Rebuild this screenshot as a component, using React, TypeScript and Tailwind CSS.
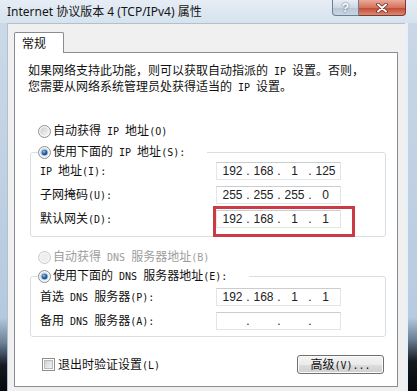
import React, { Fragment } from "react";

const LAT = "font-['DejaVu_Sans_Mono',monospace] text-[10px]";

function S({ t }: { t: string }) {
  const parts = t.split(/([\x20-\x7e]+)/).filter(Boolean);
  return (
    <span className="whitespace-pre">
      {parts.map((p, i) =>
        /^[\x20-\x7e]+$/.test(p) ? (
          <span key={i} className={LAT}>
            {p}
          </span>
        ) : (
          <Fragment key={i}>{p}</Fragment>
        )
      )}
    </span>
  );
}

function Radio({ checked, disabled }: { checked?: boolean; disabled?: boolean }) {
  return (
    <svg width="13" height="13" viewBox="0 0 13 13" className="shrink-0">
      <defs>
        <linearGradient id="rbg" x1="0" y1="0" x2="1" y2="1">
          <stop offset="0" stopColor="#c9cdd2" />
          <stop offset="1" stopColor="#f7f7f7" />
        </linearGradient>
        <radialGradient id="rdot" cx="0.4" cy="0.35" r="0.75">
          <stop offset="0" stopColor="#9ccbf2" />
          <stop offset="0.45" stopColor="#2f6cae" />
          <stop offset="1" stopColor="#10335f" />
        </radialGradient>
      </defs>
      <circle cx="6.5" cy="6.5" r="6" fill="#f6f6f6" stroke={disabled ? "#c8c8c8" : "#8e8f8f"} />
      <circle cx="6.5" cy="6.5" r="4.3" fill={disabled ? "#eeeeee" : "url(#rbg)"} />
      {checked && (
        <>
          <circle cx="6.5" cy="6.5" r="3.6" fill="#a9cdee" />
          <circle cx="6.5" cy="6.5" r="2.8" fill="url(#rdot)" />
        </>
      )}
    </svg>
  );
}

function IpBox({ v }: { v?: string[] }) {
  return (
    <div className="w-[125px] h-[18px] shrink-0 border border-[#e2e5e9] border-t-[#c9ccd0] bg-white flex items-center pl-[3px] font-['Liberation_Sans',sans-serif] text-[12px] leading-[14px] text-[#222]">
      {[0, 1, 2, 3].map((i) => (
        <Fragment key={i}>
          {i > 0 && <span className="w-[6px] text-center">.</span>}
          <span className="w-[25px] text-center">{v ? v[i] : ""}</span>
        </Fragment>
      ))}
    </div>
  );
}

function Row({ label, v }: { label: string; v?: string[] }) {
  return (
    <div className="flex items-center h-[18px]">
      <div className="w-[176px] text-[12px] leading-[14px]">
        <S t={label} />
      </div>
      <IpBox v={v} />
    </div>
  );
}

export default function App() {
  return (
    <div className="relative w-[417px] h-[391px] overflow-hidden flex flex-col bg-[#d5e1ed] font-['Noto_Sans_CJK_SC',sans-serif] text-[#111]">
      {/* title bar */}
      <div className="h-[23px] shrink-0 flex items-start bg-[linear-gradient(to_bottom,#e6edf5,#d6e2ee)]">
        <div className="pl-[7px] pt-[4px] text-[12px] leading-[15px] font-['Noto_Sans','Noto_Sans_CJK_SC',sans-serif] text-[#151515] whitespace-nowrap">
          Internet 协议版本 4 (TCP/IPv4) 属性
        </div>
        <div className="ml-auto mr-[11px] flex h-[16px]">
          <div className="w-[27px] h-full border border-t-0 border-[#6f7f92] rounded-bl-[4px] bg-[linear-gradient(to_bottom,#e8eef5,#cdd8e4_50%,#b7c5d5_51%,#cad6e3)] flex items-center justify-center text-white font-bold text-[12px] leading-none font-['Liberation_Sans',sans-serif] [text-shadow:0_0_2px_#34465c]">
            ?
          </div>
          <div className="w-[47px] h-full border border-t-0 border-l-0 border-[#7a3a33] rounded-br-[4px] bg-[linear-gradient(to_bottom,#eaa999,#d6735f_50%,#c3452f_51%,#da8a72)] flex items-center justify-center">
            <svg width="12" height="10" viewBox="0 0 12 10">
              <path d="M2 1.5 L10 8.5 M10 1.5 L2 8.5" stroke="#6a2a22" strokeWidth="3.6" strokeLinecap="round" />
              <path d="M2 1.5 L10 8.5 M10 1.5 L2 8.5" stroke="#ffffff" strokeWidth="2" strokeLinecap="round" />
            </svg>
          </div>
        </div>
      </div>

      <div className="flex flex-1 min-h-0">
        <div className="w-[7px] bg-[linear-gradient(to_bottom,#cbd9e8_0%,#b5c9de_80%,#6b7f95_87%,#141a22_93%,#05080c_100%)]" />
        <div className="w-[398px] bg-[#f0f0f0] border-l border-t border-[#b3bfcc] pt-[8px] pl-[6px] flex flex-col">
          {/* tab */}
          <div className="relative z-10 -mb-px w-[50px] h-[21px] bg-white border border-b-0 border-[#898c95] rounded-t-[2px] pl-[7px] flex items-center text-[12px] leading-[14px]">
            常规
          </div>
          {/* panel */}
          <div className="w-[384px] bg-white border border-[#898c95] flex flex-col pl-[13px] pr-[11px] pt-[10px] pb-[12px] text-[12px] leading-[14px]">
            <div className="leading-[14px]">
              <div>
                <S t="如果网络支持此功能，则可以获取自动指派的 IP 设置。否则，" />
              </div>
              <div>
                <S t="您需要从网络系统管理员处获得适当的 IP 设置。" />
              </div>
            </div>

            <div className="mt-[29px] ml-[10px] h-[14px] flex items-center gap-[2px]">
              <Radio />
              <S t="自动获得 IP 地址(O)" />
            </div>

            <fieldset className="mt-[7px] ml-[2px] border border-[#d5dfe5] rounded-[3px] pb-[8px]">
              <legend className="ml-[7px] pr-[22px] bg-white">
                <div className="h-[14px] flex items-center gap-[2px]">
                  <Radio checked />
                  <S t="使用下面的 IP 地址(S):" />
                </div>
              </legend>
              <div className="flex flex-col gap-[6px] pt-[3px] pl-[9px]">
                <Row label="IP 地址(I):" v={["192", "168", "1", "125"]} />
                <Row label="子网掩码(U):" v={["255", "255", "255", "0"]} />
                <Row label="默认网关(D):" v={["192", "168", "1", "1"]} />
              </div>
            </fieldset>

            <div className="mt-[13px] ml-[10px] h-[14px] flex items-center gap-[2px] text-[#9d9d9d]">
              <Radio disabled />
              <S t="自动获得 DNS 服务器地址(B)" />
            </div>

            <fieldset className="mt-[5px] ml-[2px] border border-[#d5dfe5] rounded-[3px] pb-[6px]">
              <legend className="ml-[7px] pr-[22px] bg-white">
                <div className="h-[14px] flex items-center gap-[2px]">
                  <Radio checked />
                  <S t="使用下面的 DNS 服务器地址(E):" />
                </div>
              </legend>
              <div className="flex flex-col gap-[6px] pt-[5px] pl-[9px]">
                <Row label="首选 DNS 服务器(P):" v={["192", "168", "1", "1"]} />
                <Row label="备用 DNS 服务器(A):" />
              </div>
            </fieldset>

            <div className="mt-[18px] h-[19px] flex items-center justify-between">
              <div className="ml-[14px] flex items-center gap-[3px]">
                <div className="w-[13px] h-[13px] border border-[#8e8f8f] bg-white p-[1px]">
                  <div className="w-full h-full border border-[#b8bcc1] bg-[linear-gradient(135deg,#cfd3d8,#f3f3f3)]" />
                </div>
                <S t="退出时验证设置(L)" />
              </div>
              <div className="mr-[2px] w-[87px] h-[19px] rounded-[3px] border border-[#707070] bg-[linear-gradient(to_bottom,#f4f4f4_0%,#ebebeb_50%,#dddddd_51%,#cfcfcf_100%)] shadow-[inset_0_0_0_1px_#fbfbfb] flex items-center justify-center">
                <S t="高级(V)..." />
              </div>
            </div>
          </div>
        </div>
        <div className="w-[12px] flex">
          <div className="w-[3px] bg-[#e9eff5]" />
          <div className="flex-1 bg-[linear-gradient(to_bottom,#c9d7e6_0%,#b7cbe0_80%,#6b7f95_86%,#141a22_92%,#05080c_100%)]" />
        </div>
      </div>

      {/* red annotation */}
      <div className="absolute left-[213px] top-[206px] w-[142px] h-[31px] border-[3px] border-[#cc3b45]" />
    </div>
  );
}
